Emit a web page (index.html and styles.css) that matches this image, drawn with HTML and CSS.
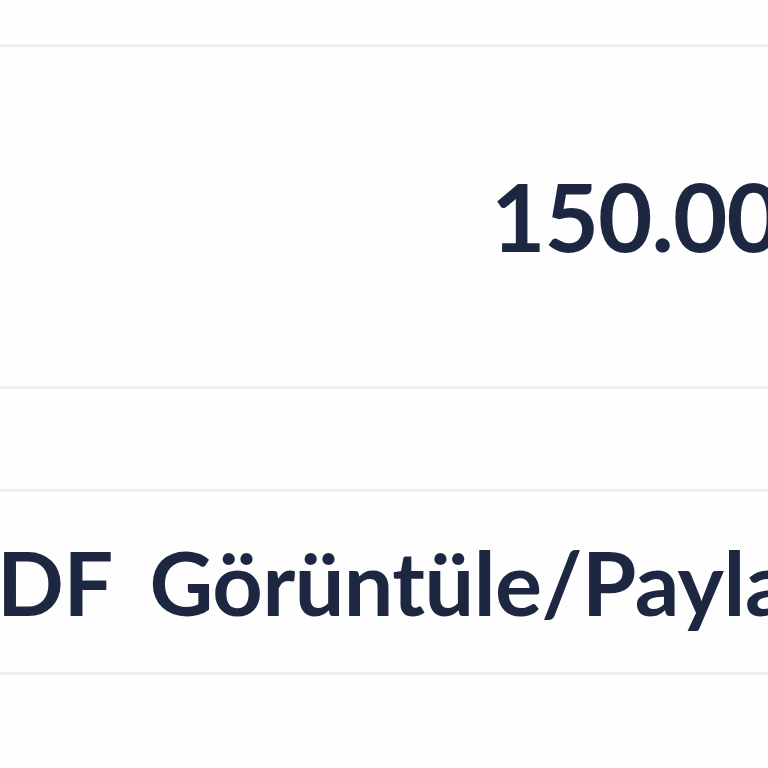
FILE: index.html
```html
<!DOCTYPE html>
<html>
<head>
  <meta charset="utf-8" />
  <title>Ödeme Detayı</title>
  <meta name="viewport" content="initial-scale=1.0, width=device-width" />
  <link rel="stylesheet" href="styles.css">
</head>
<body>
  <div class="sheet">
    <!-- üst satır -->
    <div class="row row-top"></div>

    <!-- tutar -->
    <div class="row row-amount">
      <span class="amount">150.00 ₺</span>
    </div>

    <!-- boşluk -->
    <div class="row row-spacer"></div>

    <!-- pdf butonu -->
    <div class="row row-action">
      <span class="action-label">PDF Görüntüle/Paylaş</span>
    </div>
  </div>
</body>
</html>
```

FILE: styles.css
```css
* {
  margin: 0;
  padding: 0;
  box-sizing: border-box;
}

html, body {
  background: #fefefe;
  overflow: hidden;
}

body {
  font-family: Lato, "Noto Sans", sans-serif;
  color: #1e2741;
  height: 768px;
}

.sheet {
  width: 1400px;
  margin-left: -60px;
}

.row {
  border-bottom: 3px solid #eeeeee;
  display: flex;
  align-items: center;
  white-space: nowrap;
}

.row-top {
  height: 47px;
}

.row-amount {
  height: 342px;
  padding-left: 551px;
  padding-bottom: 2px;
}

.amount {
  font-size: 94px;
  font-weight: 700;
  letter-spacing: -1px;
}

.row-spacer {
  height: 103px;
}

.row-action {
  height: 183px;
  padding-left: 3px;
}

.action-label {
  font-size: 88px;
  font-weight: 700;
  word-spacing: 18px;
  letter-spacing: -0.5px;
}
```
